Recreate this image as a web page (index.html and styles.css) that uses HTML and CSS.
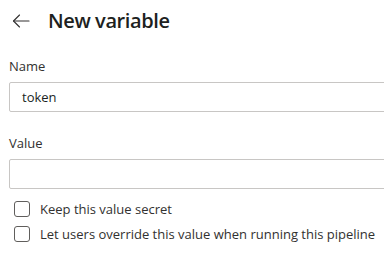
FILE: index.html
```html
<!DOCTYPE html>
<html lang="en">
<head>
<meta charset="utf-8">
<title>New variable</title>
<link rel="stylesheet" href="styles.css">
</head>
<body>
<div class="panel">
  <header class="header">
    <span class="back" aria-label="Back">
      <svg width="18" height="14" viewBox="0 0 18 14" fill="none" stroke="#323130" stroke-width="1.1" stroke-linecap="round" stroke-linejoin="round">
        <path d="M1.5 7 H17"/>
        <path d="M7.5 1 L1.5 7 L7.5 13"/>
      </svg>
    </span>
    <h1 class="title">New variable</h1>
  </header>
  <div class="field">
    <label class="label" for="name">Name</label>
    <div class="input"><span class="input-text">token</span></div>
  </div>
  <div class="field field-value">
    <label class="label" for="value">Value</label>
    <div class="input"></div>
  </div>
  <div class="checks">
    <div class="check"><span class="box"></span><span class="check-text">Keep this value secret</span></div>
    <div class="check"><span class="box"></span><span class="check-text">Let users override this value when running this pipeline</span></div>
  </div>
</div>
</body>
</html>
```
FILE: styles.css
```css
html, body {
  margin: 0;
  padding: 0;
  background: #ffffff;
}
body {
  width: 384px;
  height: 253px;
  overflow: hidden;
  font-family: "Open Sans", "Noto Sans", sans-serif;
  color: #323130;
}
.panel {
  padding-left: 9px;
}
.header {
  display: flex;
  align-items: center;
  height: 42px;
}
.back {
  display: flex;
  margin-left: 3px;
  width: 18px;
  height: 14px;
}
.title {
  margin: 0 0 0 18px;
  font-size: 20px;
  font-weight: 600;
  letter-spacing: -0.4px;
  color: #201f1e;
  line-height: 28px;
}
.field {
  margin-top: 14px;
}
.field-value {
  margin-top: 21px;
}
.label {
  display: block;
  font-size: 13px;
  line-height: 20px;
  color: #323130;
  margin-bottom: 6px;
}
.input {
  box-sizing: border-box;
  width: 420px;
  height: 30px;
  border: 1px solid #c8c6c4;
  border-radius: 2px;
  display: flex;
  align-items: center;
  padding-left: 12px;
}
.input-text {
  font-size: 13px;
  color: #201f1e;
}
.checks {
  margin-top: 12px;
  padding-left: 5px;
  display: flex;
  flex-direction: column;
  gap: 9px;
}
.check {
  display: flex;
  align-items: center;
  height: 16px;
}
.box {
  box-sizing: border-box;
  width: 16px;
  height: 16px;
  border: 1px solid #605e5c;
  border-radius: 3px;
  flex: none;
}
.check-text {
  margin-left: 10px;
  font-size: 13px;
  color: #323130;
  white-space: nowrap;
}
```
